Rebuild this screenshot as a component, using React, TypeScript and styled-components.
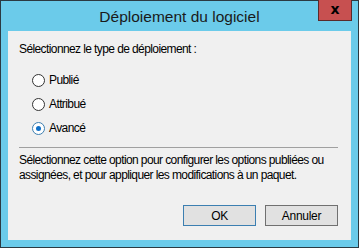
import React, { useState } from "react";
import styled, { createGlobalStyle } from "styled-components";

const GlobalStyle = createGlobalStyle`
  html, body {
    margin: 0;
    padding: 0;
    background: #ffffff;
  }
  * {
    box-sizing: border-box;
  }
`;

const Frame = styled.div`
  width: 359px;
  height: 248px;
  border: 1px solid #2b3a42;
  background: #6bcbea;
  display: flex;
  flex-direction: column;
  padding: 0 7px 7px 7px;
  font-family: "Liberation Sans", Arial, sans-serif;
  color: #000;
`;

const TitleBar = styled.div`
  height: 30px;
  display: flex;
  align-items: center;
  justify-content: center;
  position: relative;
`;

const Title = styled.span`
  font-size: 15.5px;
  color: #1a1a1a;
  margin-top: 2px;
`;

const CloseButton = styled.div`
  position: absolute;
  top: -1px;
  right: -1px;
  width: 34px;
  height: 21px;
  background: #c75050;
  border: 1px solid #5a2a2a;
  border-top: none;
  display: flex;
  align-items: center;
  justify-content: center;
  font-family: "DejaVu Sans", sans-serif;
  font-weight: bold;
  font-size: 14px;
  line-height: 1;
  color: #000;
  padding-bottom: 2px;
`;

const Client = styled.div`
  flex: 1;
  background: #f0f0f0;
  display: flex;
  flex-direction: column;
  padding: 10px 11px 0 11px;
  font-size: 12px;
  letter-spacing: -0.6px;
`;

const Prompt = styled.div`
  height: 16px;
  line-height: 16px;
`;

const Options = styled.div`
  display: flex;
  flex-direction: column;
  gap: 8px;
  margin-top: 15px;
  padding-left: 13px;
`;

const OptionRow = styled.label`
  display: flex;
  align-items: center;
  gap: 4px;
  height: 16px;
  cursor: default;
`;

const RadioCircle = styled.span<{ $checked: boolean }>`
  width: 13px;
  height: 13px;
  border-radius: 50%;
  border: 1px solid ${(p) => (p.$checked ? "#3c7fb1" : "#333333")};
  background: #ffffff;
  display: flex;
  align-items: center;
  justify-content: center;
  &::after {
    content: "";
    width: 5px;
    height: 5px;
    border-radius: 50%;
    background: ${(p) => (p.$checked ? "#0e6fc8" : "transparent")};
  }
`;

const Separator = styled.div`
  height: 1px;
  background: #a0a0a0;
  margin: 11px 0 0 0;
  width: 319px;
`;

const Description = styled.p`
  margin: 5px 0 0 0;
  line-height: 15px;
  white-space: nowrap;
`;

const ButtonRow = styled.div`
  display: flex;
  justify-content: flex-end;
  gap: 9px;
  margin-top: auto;
  margin-bottom: 14px;
  padding-right: 2px;
`;

const DialogButton = styled.button<{ $default?: boolean }>`
  width: 73px;
  height: 21px;
  background: #e1e1e1;
  border: 1px solid ${(p) => (p.$default ? "#3c7fb1" : "#707070")};
  font-family: "Liberation Sans", Arial, sans-serif;
  font-size: 12px;
  letter-spacing: -0.3px;
  color: #000;
  padding: 0;
`;

const options = ["Publié", "Attribué", "Avancé"];

export default function App() {
  const [choice, setChoice] = useState("Avancé");

  return (
    <>
      <GlobalStyle />
      <Frame>
        <TitleBar>
          <Title>Déploiement du logiciel</Title>
          <CloseButton>x</CloseButton>
        </TitleBar>
        <Client>
          <Prompt>Sélectionnez le type de déploiement :</Prompt>
          <Options>
            {options.map((item) => (
              <OptionRow key={item} onClick={() => setChoice(item)}>
                <RadioCircle $checked={choice === item} />
                {item}
              </OptionRow>
            ))}
          </Options>
          <Separator />
          <Description>
            Sélectionnez cette option pour configurer les options publiées ou
            <br />
            assignées, et pour appliquer les modifications à un paquet.
          </Description>
          <ButtonRow>
            <DialogButton $default>OK</DialogButton>
            <DialogButton>Annuler</DialogButton>
          </ButtonRow>
        </Client>
      </Frame>
    </>
  );
}
